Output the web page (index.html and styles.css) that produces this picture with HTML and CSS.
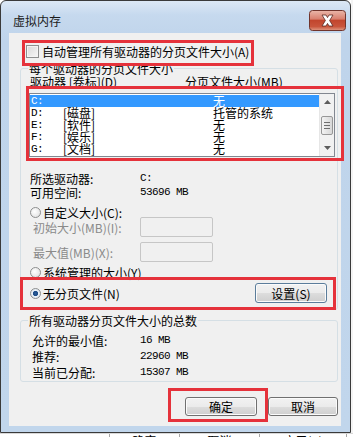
FILE: index.html
```html
<!DOCTYPE html>
<html lang="zh-CN">
<head>
<meta charset="utf-8">
<title>虚拟内存</title>
<link rel="stylesheet" href="styles.css">
</head>
<body>
<div class="screen">
  <div class="window">
    <div class="titlebar">
      <span class="title">虚拟内存</span>
      <span class="close" aria-label="关闭">
        <svg width="37" height="21" viewBox="0 0 37 21">
          <defs>
            <linearGradient id="cg" x1="0" y1="0" x2="0" y2="1">
              <stop offset="0" stop-color="#eab7aa"/>
              <stop offset="0.42" stop-color="#d98170"/>
              <stop offset="0.5" stop-color="#c2462e"/>
              <stop offset="0.8" stop-color="#c9553c"/>
              <stop offset="1" stop-color="#e09b85"/>
            </linearGradient>
          </defs>
          <rect x="0.5" y="0.5" width="36" height="20" rx="3" fill="url(#cg)" stroke="#70342c"/>
          <path d="M13 5 L17 5 L18.5 7.6 L20 5 L24 5 L20.6 10.5 L24 16 L20 16 L18.5 13.4 L17 16 L13 16 L16.4 10.5 Z" fill="#fff" stroke="#5a2822" stroke-width="0.8"/>
        </svg>
      </span>
    </div>
    <div class="frame">
      <div class="content">
        <div class="auto-row"><span class="checkbox"></span><span class="auto-text">自动管理所有驱动器的分页文件大小(A)</span></div>

        <div class="group group-drive">
          <div class="group-title">每个驱动器的分页文件大小</div>
          <div class="list-header"><span class="col-drive">驱动器 [卷标](D)</span><span>分页文件大小(MB)</span></div>
          <div class="listbox">
            <div class="rows">
              <div class="row selected"><span class="c1">C:</span><span class="c2"></span><span class="c3">无</span></div>
              <div class="row"><span class="c1">D:</span><span class="c2">[磁盘]</span><span class="c3">托管的系统</span></div>
              <div class="row"><span class="c1">E:</span><span class="c2">[软件]</span><span class="c3">无</span></div>
              <div class="row"><span class="c1">F:</span><span class="c2">[娱乐]</span><span class="c3">无</span></div>
              <div class="row"><span class="c1">G:</span><span class="c2">[文档]</span><span class="c3">无</span></div>
            </div>
            <div class="scrollbar">
              <div class="sb-btn"><svg width="7" height="4" viewBox="0 0 7 4"><path d="M0 4 L3.5 0 L7 4 Z" fill="#5c5c5c"/></svg></div>
              <div class="sb-track"><div class="sb-thumb"><i></i><i></i><i></i></div></div>
              <div class="sb-btn"><svg width="7" height="4" viewBox="0 0 7 4"><path d="M0 0 L7 0 L3.5 4 Z" fill="#5c5c5c"/></svg></div>
            </div>
          </div>
          <div class="info-row first"><span class="label">所选驱动器:</span><span class="val">C:</span></div>
          <div class="info-row"><span class="label">可用空间:</span><span class="val">53696 MB</span></div>
          <div class="radio-row custom"><span class="radio"></span><span>自定义大小(C):</span></div>
          <div class="field-row"><span class="flabel">初始大小(MB)(I):</span><span class="input"></span></div>
          <div class="field-row second"><span class="flabel">最大值(MB)(X):</span><span class="input"></span></div>
          <div class="radio-row system"><span class="radio"></span><span>系统管理的大小(Y)</span></div>
          <div class="radio-row nopage"><span class="radio checked"></span><span>无分页文件(N)</span><span class="btn btn-set">设置(S)</span></div>
        </div>

        <div class="group group-total">
          <div class="group-title">所有驱动器分页文件大小的总数</div>
          <div class="total-row"><span class="tlabel">允许的最小值:</span><span class="val">16 MB</span></div>
          <div class="total-row"><span class="tlabel">推荐:</span><span class="val">22960 MB</span></div>
          <div class="total-row"><span class="tlabel">当前已分配:</span><span class="val">15307 MB</span></div>
        </div>

        <div class="actions">
          <span class="btn btn-ok">确定</span>
          <span class="btn btn-cancel">取消</span>
        </div>

        <div class="mark mark-auto"></div>
        <div class="mark mark-list"></div>
        <div class="mark mark-nopage"></div>
        <div class="mark mark-ok"></div>
      </div>
    </div>
  </div>
  <div class="right-edge"></div>
</div>
<div class="behind">
  <span class="bcell b1"></span>
  <span class="bcell b2">确定</span>
  <span class="bcell b3">取消</span>
  <span class="bcell b4">应用(A)</span>
</div>
</body>
</html>
```

FILE: styles.css
```css
* { box-sizing: border-box; }
html, body { margin: 0; padding: 0; }
body {
  width: 353px;
  height: 437px;
  overflow: hidden;
  background: #ffffff;
  font-family: "Noto Sans CJK SC", "Noto Sans CJK JP", sans-serif;
  font-size: 12px;
  color: #000;
}

.screen { display: flex; height: 433px; }
.right-edge { flex: 1; background: #f4f4f4; }

.window {
  width: 351px;
  height: 433px;
  border: 1px solid #3a3a3a;
  border-radius: 6px 6px 0 0;
  background: linear-gradient(to bottom, #dce8f5 0, #c6d9ee 14px, #bfd4eb 40px, #c1d6ec 100%);
  display: flex;
  flex-direction: column;
}

.titlebar {
  height: 32px;
  display: flex;
  align-items: flex-start;
  padding-left: 12px;
}
.title {
  margin-top: 13px;
  line-height: 14px;
  font-size: 12px;
  color: #1b1b1b;
}
.close {
  margin-left: auto;
  margin-right: 4px;
  margin-top: 9px;
  width: 37px;
  height: 21px;
  display: block;
}
.close svg { display: block; }

.frame {
  flex: 1;
  display: flex;
  padding: 0 9px 6px 8px;
}
.content {
  position: relative;
  flex: 1;
  background: #f0f0f0;
  display: flex;
  flex-direction: column;
}

/* checkbox row */
.auto-row {
  margin-top: 12px;
  height: 13px;
  padding-left: 17px;
  display: flex;
  align-items: center;
  line-height: 13px;
}
.checkbox {
  width: 13px;
  height: 13px;
  border: 1px solid #8e8f8f;
  background: linear-gradient(135deg, #d9d9d9, #f7f7f7);
  box-shadow: inset 0 0 0 1px #f4f4f4;
  flex: none;
}
.auto-text { margin-left: 3px; }

/* group boxes */
.group {
  margin-left: 11px;
  margin-right: 3px;
  border: 1px solid #d5dfe5;
  border-radius: 3px;
  display: flex;
  flex-direction: column;
}
.group-title {
  margin: -7px 0 0 7px;
  padding: 0 1px;
  width: fit-content;
  height: 13px;
  line-height: 13px;
  background: #f0f0f0;
}
.group-drive { margin-top: 10px; padding-bottom: 6px; }
.group-total { margin-top: 10px; padding-bottom: 2px; }

.list-header {
  margin-top: 1px;
  height: 12px;
  line-height: 12px;
  padding-left: 9px;
  display: flex;
}
.col-drive { width: 155px; }

.listbox {
  margin-top: 5px;
  margin-left: 8px;
  width: 306px;
  height: 64px;
  border: 1px solid #828790;
  background: #fff;
  display: flex;
}
.rows { flex: 1; padding-top: 1px; }
.row {
  display: flex;
  height: 12px;
  line-height: 12px;
}
.row.selected { background: #3399ff; color: #fff; }
.c1 {
  width: 33px;
  padding-left: 1px;
  font-family: "Liberation Mono", "DejaVu Sans Mono", monospace;
  font-size: 11px;
  letter-spacing: -0.6px;
}
.c2 { width: 150px; }

.scrollbar {
  width: 15px;
  background: #f1f1f1;
  border-left: 1px solid #e6e6e6;
  display: flex;
  flex-direction: column;
}
.sb-btn {
  height: 16px;
  display: flex;
  align-items: center;
  justify-content: center;
}
.sb-btn svg { display: block; }
.sb-track { flex: 1; padding-top: 6px; }
.sb-thumb {
  margin: 0 0 0 1px;
  width: 12px;
  height: 19px;
  border: 1px solid #979797;
  border-radius: 2px;
  background: linear-gradient(to right, #f3f3f3, #e4e4e4 50%, #d8d8d8);
  display: flex;
  flex-direction: column;
  align-items: center;
  justify-content: center;
  gap: 2px;
}
.sb-thumb i {
  display: block;
  width: 6px;
  height: 1px;
  background: #6d6d6d;
}

.info-row {
  height: 13px;
  line-height: 13px;
  padding-left: 9px;
  display: flex;
  margin-top: 1px;
}
.info-row.first { margin-top: 15px; }
.label { width: 110px; }
.val {
  font-family: "Liberation Mono", "DejaVu Sans Mono", monospace;
  font-size: 11px;
  letter-spacing: -0.6px;
}

.radio-row {
  height: 10px;
  padding-left: 9px;
  display: flex;
  align-items: center;
  line-height: 13px;
}
.radio-row.custom { margin-top: 8px; }
.radio-row.system { margin-top: 5px; }
.radio-row.nopage { margin-top: 6px; height: 20px; }
.radio {
  width: 11px;
  height: 11px;
  border-radius: 50%;
  border: 1px solid #8e8f8f;
  background: radial-gradient(circle at 40% 40%, #ffffff, #dcdcdc);
  margin-right: 2px;
  flex: none;
}
.radio.checked {
  background: radial-gradient(circle, #2d5d98 0, #1a4a86 2.2px, #eaf1f8 3px, #d6dde4 100%);
}

.field-row {
  height: 20px;
  padding-left: 12px;
  display: flex;
  align-items: center;
  line-height: 13px;
}
.field-row.second { margin-top: 5px; }
.flabel { width: 107px; color: #8a8a8a; }
.input {
  width: 73px;
  height: 20px;
  border: 1px solid #c6c6c6;
  border-radius: 2px;
  background: #f0f0f0;
}

.btn {
  display: flex;
  align-items: center;
  justify-content: center;
  height: 19px;
  border: 1px solid #707070;
  border-radius: 3px;
  background: linear-gradient(to bottom, #f2f2f2 0, #ebebeb 50%, #dddddd 51%, #cfcfcf 100%);
  box-shadow: inset 0 0 0 1px #fbfbfb;
  line-height: 13px;
}
.btn-set {
  margin-left: auto;
  margin-right: 10px;
  width: 72px;
  height: 20px;
  border-color: #5b7d9b;
}

.total-row {
  height: 13px;
  line-height: 13px;
  padding-left: 11px;
  display: flex;
  margin-top: 3px;
}
.total-row:nth-child(2) { margin-top: 7px; }
.tlabel { width: 108px; }

.actions {
  margin-top: 15px;
  padding-right: 3px;
  display: flex;
  justify-content: flex-end;
  gap: 11px;
}
.btn-ok { width: 72px; }
.btn-cancel { width: 70px; }

/* red annotation frames drawn over the dialog */
.mark {
  position: absolute;
  border: 3px solid #e5323b;
}
.mark-auto { left: 13px; top: 7px; width: 232px; height: 26px; }
.mark-list { left: 17px; top: 53px; width: 318px; height: 75px; }
.mark-nopage { left: 11px; top: 244px; width: 316px; height: 33px; }
.mark-ok { left: 159px; top: 355px; width: 100px; height: 34px; }

/* window behind the dialog, barely visible */
.behind {
  height: 4px;
  overflow: hidden;
  display: flex;
  background: #fff;
  border-top: 1px solid #d8d8d8;
  line-height: 12px;
}
.bcell {
  display: block;
  border-right: 1px solid #a8a8a8;
  text-align: center;
  padding-top: 1px;
}
.b1 { width: 110px; }
.b2 { width: 70px; }
.b3 { width: 80px; }
.b4 { width: 87px; }
```
